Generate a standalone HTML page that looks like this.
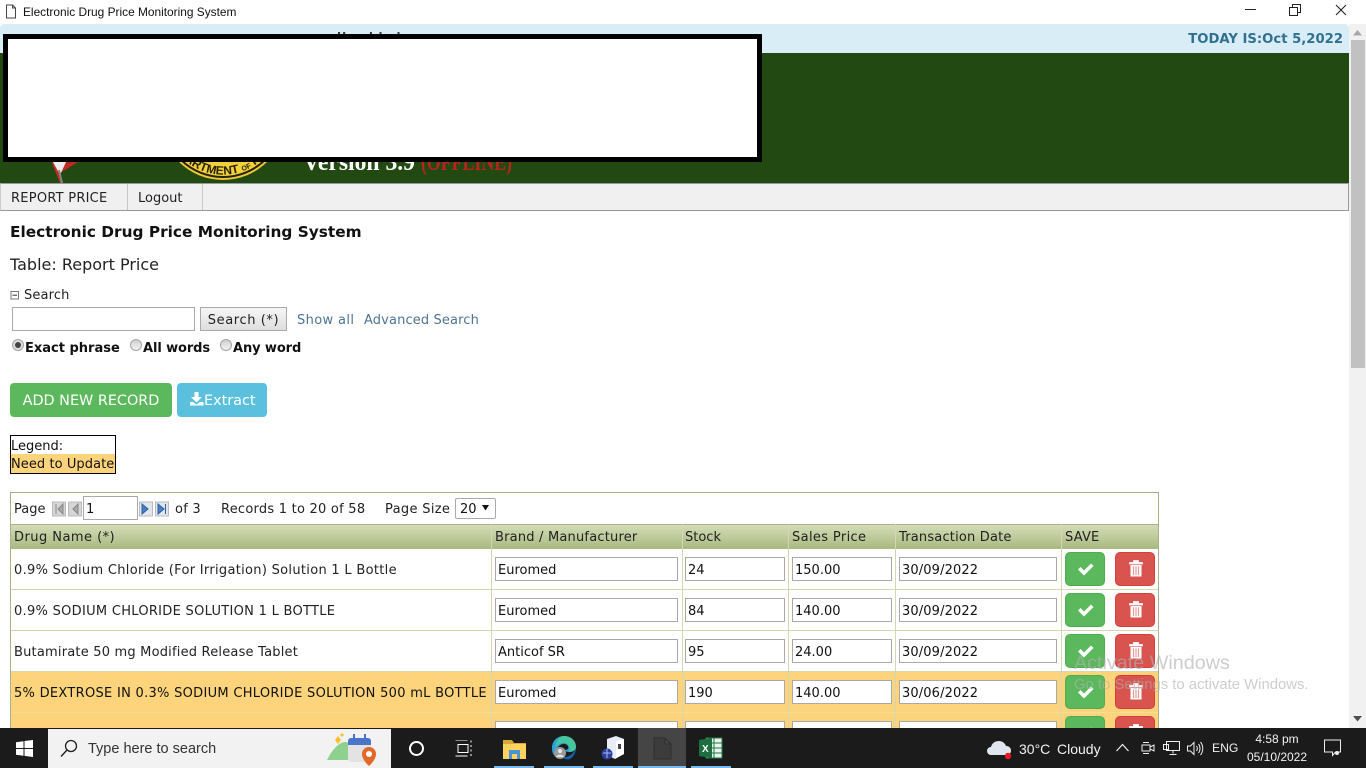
<!DOCTYPE html>
<html><head><meta charset="utf-8"><title>Electronic Drug Price Monitoring System</title>
<style>
html,body{margin:0;padding:0;width:1366px;height:768px;overflow:hidden;background:#fff}
body{position:relative;font-family:"DejaVu Sans","Liberation Sans",sans-serif;font-size:13px;color:#222}
.a{position:absolute;white-space:nowrap}
.inp{position:absolute;box-sizing:border-box;background:#fff;border:1px solid #a9a9a9;height:24px;line-height:25px;padding-left:2px;font-size:13px;color:#111}
.dt{letter-spacing:.12px}
.sv,.dl{position:absolute;width:40px;height:34px;border-radius:5px;box-sizing:border-box}
.sv{background:#5cb85c;border:1px solid #4cae4c}
.dl{background:#d9534f;border:1px solid #d43f3a}
.sv svg,.dl svg{position:absolute;left:11px;top:6px}
.hl{position:absolute;background:#d3d7b4}
.seg{font-family:"Liberation Sans",sans-serif}
.rad{position:absolute;width:12px;height:12px;border-radius:50%;box-sizing:border-box;background:linear-gradient(#cfcfcf,#f4f4f4);border:1px solid #a5a5a5}
</style></head><body>

<!-- window title bar -->
<svg class="a" style="left:5px;top:4px" width="12" height="15" viewBox="0 0 12 15"><path d="M1.5 1h6l3 3v10h-9z M7.5 1v3h3" fill="#fff" stroke="#444" stroke-width="1"/></svg>
<div class="a seg" style="left:23px;top:4px;font-size:11.9px;line-height:16px;color:#111">Electronic Drug Price Monitoring System</div>
<div class="a" style="left:1245px;top:9px;width:11px;height:1px;background:#222"></div>
<svg class="a" style="left:1289px;top:4px" width="12" height="12" viewBox="0 0 12 12"><path d="M.5 3.5h8v8h-8z M3.5 3V.5h8v8H9" fill="none" stroke="#222"/></svg>
<svg class="a" style="left:1335px;top:4px" width="12" height="12" viewBox="0 0 12 12"><path d="M1 1l10 10M11 1L1 11" fill="none" stroke="#222" stroke-width="1.1"/></svg>

<!-- top info -->
<div class="a" style="left:0;top:24px;width:1349px;height:29px;background:#d9edf7;border-radius:4px 4px 0 0"></div>
<div class="a" style="right:23px;top:31px;font-size:13.2px;font-weight:bold;color:#31708f;line-height:17px">TODAY IS:Oct 5,2022</div>
<div class="a" style="left:337px;top:30px;font-size:11px;color:#333;font-weight:bold;letter-spacing:1px">Ho   al   la l</div>

<!-- green header -->
<div class="a" style="left:0;top:53px;width:1349px;height:130px;background:#224912"></div>
<svg class="a" style="left:0;top:53px" width="560" height="130" viewBox="0 53 560 130">
<path d="M52 163L60 183H63L60 173L78 162Z" fill="#c62a22"/>
<path d="M53 162L60 175L66 162Z" fill="#eee"/>
<path d="M59 170L62 183" stroke="#7d8a80" stroke-width="2"/>
<circle cx="223" cy="117" r="63" fill="#e9c83a"/>
<circle cx="223" cy="117" r="60" fill="#f1d23a" stroke="#2a2208" stroke-width="2"/>
<path id="arcp" d="M173 146A58 58 0 0 0 273 146" fill="none"/>
<text font-family="Liberation Sans,sans-serif" font-weight="bold" font-size="12" fill="#2a2208"><textPath href="#arcp" startOffset="18">ARTMENT <tspan font-size="7">OF</tspan> HEALTH</textPath></text>
<text x="303" y="170" font-family="Liberation Serif,serif" font-weight="bold" font-size="24" fill="#fff" textLength="112" lengthAdjust="spacingAndGlyphs">Version 3.9</text>
<text x="421" y="170" font-family="Liberation Serif,serif" font-weight="bold" font-size="24" fill="#b8231c" textLength="91" lengthAdjust="spacingAndGlyphs">(OFFLINE)</text>
</svg>

<!-- redaction box -->
<div class="a" style="left:3px;top:34px;width:759px;height:128px;box-sizing:border-box;background:#fff;border:solid #000;border-width:5px 5px 5px 5px"></div>

<!-- menu -->
<div class="a" style="left:0;top:183px;width:1349px;height:28px;box-sizing:border-box;background:#f0f0f0;border:1px solid #999;border-left-color:#ccc"></div>
<div class="a" style="left:127px;top:184px;width:1px;height:26px;background:#c8c8c8"></div>
<div class="a" style="left:202px;top:184px;width:1px;height:26px;background:#c8c8c8"></div>
<div class="a" style="left:11px;top:191px;line-height:16px;font-size:13px;letter-spacing:.25px">REPORT PRICE</div>
<div class="a" style="left:138px;top:191px;line-height:16px;font-size:13px">Logout</div>

<!-- headings -->
<div class="a" style="left:10px;top:222px;font-size:15.35px;font-weight:bold;color:#111;line-height:20px">Electronic Drug Price Monitoring System</div>
<div class="a" style="left:10px;top:255px;font-size:16px;color:#222;line-height:20px">Table: Report Price</div>

<!-- search -->
<svg class="a" style="left:10px;top:290px" width="10" height="10"><rect x="1" y="1.5" width="7.5" height="7.5" fill="#fff" stroke="#777"/><path d="M2.5 5.2h4.5" stroke="#333"/></svg>
<div class="a" style="left:24px;top:287px;line-height:17px;font-size:13px;letter-spacing:.15px">Search</div>
<div class="a" style="left:12px;top:307px;width:183px;height:24px;box-sizing:border-box;background:#fff;border:1px solid #aaa"></div>
<div class="a" style="left:200px;top:307px;width:87px;height:24px;box-sizing:border-box;background:linear-gradient(#f6f6f6,#dedede);border:1px solid #aaa;text-align:center;line-height:25px;font-size:13px;letter-spacing:.6px">Search (*)</div>
<div class="a" style="left:297px;top:312px;line-height:17px;color:#4d7495;font-size:13px;letter-spacing:.37px">Show all</div>
<div class="a" style="left:364px;top:312px;line-height:17px;color:#4d7495;font-size:13px;letter-spacing:.13px">Advanced Search</div>
<div class="rad" style="left:12px;top:339px;background:#ddd"></div>
<div class="a" style="left:15px;top:342px;width:6px;height:6px;border-radius:50%;background:#444"></div>
<div class="a" style="left:25px;top:340px;line-height:17px;font-weight:bold;font-size:13px;color:#111">Exact phrase</div>
<div class="rad" style="left:130px;top:339px"></div>
<div class="a" style="left:143px;top:340px;line-height:17px;font-weight:bold;font-size:13px;color:#111;letter-spacing:-.1px">All words</div>
<div class="rad" style="left:220px;top:339px"></div>
<div class="a" style="left:233px;top:340px;line-height:17px;font-weight:bold;font-size:13px;color:#111;letter-spacing:-.1px">Any word</div>

<!-- buttons -->
<div class="a" style="left:10px;top:383px;width:162px;height:34px;background:#5cb85c;border-radius:4px;color:#fff;font-size:14.4px;line-height:36px;text-align:center">ADD NEW RECORD</div>
<div class="a" style="left:177px;top:383px;width:90px;height:34px;background:#5bc0de;border-radius:4px"></div>
<svg class="a" style="left:190px;top:392px" width="14" height="14" viewBox="0 0 14 14"><path d="M4.5 0h4v5h3.5L6.5 10.5 1 5h3.5z M0 10h3l3.5 2.5L10 10h3.5v3.5H0z" fill="#fff"/></svg>
<div class="a" style="left:204px;top:392px;color:#fff;font-size:14.4px;line-height:18px">Extract</div>

<!-- legend -->
<div class="a" style="left:10px;top:435px;width:106px;height:39px;box-sizing:border-box;border:1px solid #000;background:#fff">
<div style="height:18px;line-height:21px;padding-left:0;font-size:13px;color:#111">Legend:</div>
<div style="height:19px;line-height:22px;padding-left:0;font-size:13px;background:#fdd47c;color:#111;letter-spacing:.07px">Need to Update</div>
</div>

<!-- table -->
<div class="a" style="left:10px;top:492px;width:1149px;height:236px;overflow:hidden;box-sizing:border-box;border:solid #a9b08a;border-width:1px 1px 0 1px;background:#fff">
<div class="a" style="left:0;top:178px;width:1149px;height:41px;background:#fdd47c"></div>
<div class="a" style="left:0;top:220px;width:1149px;height:20px;background:#fdd47c"></div>
<div class="a" style="left:0;top:31px;width:1149px;height:25px;background:linear-gradient(#d4dcb6,#a9b981);border-top:1px solid #a9b08a;box-sizing:border-box"></div>
</div>
<!-- grid lines -->
<div class="hl" style="left:491px;top:524px;width:1px;height:204px"></div>
<div class="hl" style="left:682px;top:524px;width:1px;height:204px"></div>
<div class="hl" style="left:788px;top:524px;width:1px;height:204px"></div>
<div class="hl" style="left:895px;top:524px;width:1px;height:204px"></div>
<div class="hl" style="left:1061px;top:524px;width:1px;height:204px"></div>
<div class="hl" style="left:11px;top:589px;width:1147px;height:1px"></div>
<div class="hl" style="left:11px;top:630px;width:1147px;height:1px"></div>
<div class="hl" style="left:11px;top:671px;width:1147px;height:1px"></div>
<div class="hl" style="left:11px;top:712px;width:1147px;height:1px;background:#f3dca0"></div>

<!-- pager -->
<div class="a" style="left:14px;top:501px;line-height:17px">Page</div>
<svg class="a" style="left:52px;top:501px" width="32" height="16" viewBox="0 0 32 16"><rect x=".5" y="1" width="13" height="14" fill="#d6d6d6" stroke="#bbb"/><path d="M4 3v10M11 3L6 8l5 5z" fill="#aaa" stroke="#888"/><rect x="16.5" y="1" width="13" height="14" fill="#d6d6d6" stroke="#bbb"/><path d="M26 3l-5 5 5 5z" fill="#aaa" stroke="#888"/></svg>
<div class="a" style="left:83px;top:496px;width:55px;height:24px;box-sizing:border-box;background:#fff;border:1px solid #aaa;line-height:25px;padding-left:2px;color:#111">1</div>
<svg class="a" style="left:139px;top:501px" width="32" height="16" viewBox="0 0 32 16"><rect x=".5" y="1" width="13" height="14" fill="#dfe6ee" stroke="#bbb"/><path d="M3 3l6 5-6 5z" fill="#4a7fc1" stroke="#2f5f9e"/><rect x="16.5" y="1" width="13" height="14" fill="#dfe6ee" stroke="#bbb"/><path d="M19 3l6 5-6 5zM26.500 3v10" fill="#4a7fc1" stroke="#2f5f9e"/></svg>
<div class="a" style="left:175px;top:501px;line-height:17px;letter-spacing:.25px">of 3</div>
<div class="a" style="left:221px;top:501px;line-height:17px;letter-spacing:.24px">Records 1 to 20 of 58</div>
<div class="a" style="left:385px;top:501px;line-height:17px;letter-spacing:.33px">Page Size</div>
<div class="a" style="left:455px;top:498px;width:41px;height:21px;box-sizing:border-box;background:#fff;border:1px solid #aaa;border-radius:2px;line-height:21px;padding-left:4px;color:#111">20</div>
<svg class="a" style="left:482px;top:505px" width="8" height="6"><path d="M0 0h7L3.500 5.500z" fill="#111"/></svg>

<!-- table header text -->
<div class="a" style="left:14px;top:529px;line-height:17px;letter-spacing:.46px">Drug Name (*)</div>
<div class="a" style="left:495px;top:529px;line-height:17px;letter-spacing:.2px">Brand / Manufacturer</div>
<div class="a" style="left:685px;top:529px;line-height:17px">Stock</div>
<div class="a" style="left:792px;top:529px;line-height:17px;letter-spacing:.36px">Sales Price</div>
<div class="a" style="left:899px;top:529px;line-height:17px;letter-spacing:.19px">Transaction Date</div>
<div class="a" style="left:1065px;top:529px;line-height:17px;letter-spacing:.2px">SAVE</div>

<!-- rows -->
<div class="a" style="left:14px;top:562px;line-height:17px;letter-spacing:.3px">0.9% Sodium Chloride (For Irrigation) Solution 1 L Bottle</div>
<div class="inp" style="left:495px;top:557px;width:183px">Euromed</div><div class="inp" style="left:685px;top:557px;width:100px">24</div><div class="inp" style="left:792px;top:557px;width:100px">150.00</div><div class="inp dt" style="left:899px;top:557px;width:158px">30/09/2022</div>
<div class="sv" style="left:1065px;top:552px"><svg width="18" height="20" viewBox="0 0 18 20"><path d="M1 10.500l2.500-2.500 3.500 3.500L14 4.500l2.500 2.500-9.500 9.500z" fill="#fff"/></svg></div>
<div class="dl" style="left:1115px;top:552px"><svg width="18" height="20" viewBox="0 0 18 20"><path d="M2.500 3.500h13v1.500h-13zM6.500 3.500V1.500h5v2" fill="#fff" stroke="#fff" stroke-width=".8"/><path d="M3.500 6h11v11.500h-11z" fill="#fff"/><path d="M6.500 7.500v8.500M9 7.500v8.500M11.500 7.500v8.500" stroke="#e99a98" stroke-width="1.200"/></svg></div>

<div class="a" style="left:14px;top:603px;line-height:17px;letter-spacing:.29px">0.9% SODIUM CHLORIDE SOLUTION 1 L BOTTLE</div>
<div class="inp" style="left:495px;top:598px;width:183px">Euromed</div><div class="inp" style="left:685px;top:598px;width:100px">84</div><div class="inp" style="left:792px;top:598px;width:100px">140.00</div><div class="inp dt" style="left:899px;top:598px;width:158px">30/09/2022</div>
<div class="sv" style="left:1065px;top:593px"><svg width="18" height="20" viewBox="0 0 18 20"><path d="M1 10.500l2.500-2.500 3.500 3.500L14 4.500l2.500 2.500-9.500 9.500z" fill="#fff"/></svg></div>
<div class="dl" style="left:1115px;top:593px"><svg width="18" height="20" viewBox="0 0 18 20"><path d="M2.500 3.500h13v1.500h-13zM6.500 3.500V1.500h5v2" fill="#fff" stroke="#fff" stroke-width=".8"/><path d="M3.500 6h11v11.500h-11z" fill="#fff"/><path d="M6.500 7.500v8.500M9 7.500v8.500M11.500 7.500v8.500" stroke="#e99a98" stroke-width="1.200"/></svg></div>

<div class="a" style="left:14px;top:644px;line-height:17px;letter-spacing:.2px">Butamirate 50 mg Modified Release Tablet</div>
<div class="inp" style="left:495px;top:639px;width:183px">Anticof SR</div><div class="inp" style="left:685px;top:639px;width:100px">95</div><div class="inp" style="left:792px;top:639px;width:100px">24.00</div><div class="inp dt" style="left:899px;top:639px;width:158px">30/09/2022</div>
<div class="sv" style="left:1065px;top:634px"><svg width="18" height="20" viewBox="0 0 18 20"><path d="M1 10.500l2.500-2.500 3.500 3.500L14 4.500l2.500 2.500-9.500 9.500z" fill="#fff"/></svg></div>
<div class="dl" style="left:1115px;top:634px"><svg width="18" height="20" viewBox="0 0 18 20"><path d="M2.500 3.500h13v1.500h-13zM6.500 3.500V1.500h5v2" fill="#fff" stroke="#fff" stroke-width=".8"/><path d="M3.500 6h11v11.500h-11z" fill="#fff"/><path d="M6.500 7.500v8.500M9 7.500v8.500M11.500 7.500v8.500" stroke="#e99a98" stroke-width="1.200"/></svg></div>

<div class="a" style="left:14px;top:685px;line-height:17px;color:#111;letter-spacing:.29px">5% DEXTROSE IN 0.3% SODIUM CHLORIDE SOLUTION 500 mL BOTTLE</div>
<div class="inp" style="left:495px;top:680px;width:183px">Euromed</div><div class="inp" style="left:685px;top:680px;width:100px">190</div><div class="inp" style="left:792px;top:680px;width:100px">140.00</div><div class="inp dt" style="left:899px;top:680px;width:158px">30/06/2022</div>
<div class="sv" style="left:1065px;top:675px"><svg width="18" height="20" viewBox="0 0 18 20"><path d="M1 10.500l2.500-2.500 3.500 3.500L14 4.500l2.500 2.500-9.500 9.500z" fill="#fff"/></svg></div>
<div class="dl" style="left:1115px;top:675px"><svg width="18" height="20" viewBox="0 0 18 20"><path d="M2.500 3.500h13v1.500h-13zM6.500 3.500V1.500h5v2" fill="#fff" stroke="#fff" stroke-width=".8"/><path d="M3.500 6h11v11.500h-11z" fill="#fff"/><path d="M6.500 7.500v8.500M9 7.500v8.500M11.500 7.500v8.500" stroke="#e99a98" stroke-width="1.200"/></svg></div>

<div class="inp" style="left:495px;top:721px;width:183px;height:7px;border-bottom:0"></div><div class="inp" style="left:685px;top:721px;width:100px;height:7px;border-bottom:0"></div><div class="inp" style="left:792px;top:721px;width:100px;height:7px;border-bottom:0"></div><div class="inp" style="left:899px;top:721px;width:158px;height:7px;border-bottom:0"></div>
<div class="sv" style="left:1065px;top:716px"><svg width="18" height="20" viewBox="0 0 18 20"><path d="M1 10.500l2.500-2.500 3.500 3.500L14 4.500l2.500 2.500-9.500 9.500z" fill="#fff"/></svg></div>
<div class="dl" style="left:1115px;top:716px"><svg width="18" height="20" viewBox="0 0 18 20"><path d="M2.500 3.500h13v1.500h-13zM6.500 3.500V1.500h5v2" fill="#fff" stroke="#fff" stroke-width=".8"/></svg></div>

<!-- scrollbar -->
<div class="a" style="left:1349px;top:24px;width:17px;height:704px;background:#f1f1f1"></div>
<div class="a" style="left:1351px;top:40px;width:14px;height:328px;background:#c1c1c1"></div>
<svg class="a" style="left:1353px;top:30px" width="10" height="6"><path d="M0 5.500L4.500 0 9 5.500z" fill="#a6a6a6"/></svg>
<svg class="a" style="left:1353px;top:716px" width="10" height="6"><path d="M0 0h9L4.500 5.500z" fill="#505050"/></svg>

<!-- activate windows -->
<div class="a seg" style="left:1074px;top:651px;font-size:19.75px;line-height:24px;color:#b0b0b0;opacity:.62">Activate Windows</div>
<div class="a seg" style="left:1074px;top:677px;font-size:14.87px;line-height:17px;color:#b0b0b0;opacity:.62">Go to Settings to activate Windows.</div>

<!-- taskbar -->
<div class="a" style="left:0;top:728px;width:1366px;height:40px;background:#1b1b1b"></div>
<svg class="a" style="left:16px;top:740px" width="17" height="17" viewBox="0 0 17 17"><path d="M0 2.300L7.500 1.200V8H0zM8.500 1L17 0v8H8.500zM0 9h7.500v6.800L0 14.700zM8.500 9H17v8l-8.500-1.100z" fill="#fff"/></svg>
<div class="a" style="left:48px;top:729px;width:343px;height:39px;background:#f2f2f2"></div>
<svg class="a" style="left:60px;top:739px" width="18" height="19" viewBox="0 0 18 19"><circle cx="11" cy="7" r="5.500" fill="none" stroke="#222" stroke-width="1.300"/><path d="M7 11l-6 6.500" stroke="#222" stroke-width="1.400"/></svg>
<div class="a seg" style="left:88px;top:740px;font-size:14.500px;line-height:19px;color:#333">Type here to search</div>
<svg class="a" style="left:327px;top:730px" width="52" height="36" viewBox="0 0 52 36">
<path d="M8 10l3-4 3 4-3 4z" fill="#f7c12c"/><path d="M13 5l2-2 2 2-2 2z" fill="#f7c12c"/>
<path d="M0 30C6 18 13 12 18 12c6 0 10 8 12 18z" fill="#8ed08e"/>
<rect x="21" y="8" width="23" height="24" rx="3" fill="#e3e3e3"/>
<path d="M21 15v-4a3 3 0 0 1 3-3h17a3 3 0 0 1 3 3v4z" fill="#4a76c9"/>
<path d="M27 4v6M38 4v6" stroke="#4a76c9" stroke-width="2"/>
<path d="M49 24c0 6-7 12-7 12s-7-6-7-12a7 7 0 0 1 14 0z" fill="#e2692a"/>
<circle cx="42" cy="24" r="3" fill="#fff"/></svg>
<svg class="a" style="left:408px;top:740px" width="17" height="17"><circle cx="8.500" cy="8.500" r="6.500" fill="none" stroke="#fff" stroke-width="2"/></svg>
<svg class="a" style="left:455px;top:740px" width="18" height="17" viewBox="0 0 18 17"><path d="M.5 0h12M.5 16h12M3 4.500h10v8H3zM16 .5v2M16 5v2M16 9.500v2M16 14v2" fill="none" stroke="#fff"/></svg>
<svg class="a" style="left:503px;top:738px" width="24" height="22" viewBox="0 0 24 22"><path d="M0 2h9l2 3h12v4H0z" fill="#d8a93a"/><rect y="6" width="23" height="15" fill="#ffd45e"/><rect x="6" y="12" width="11" height="9" fill="#4c93d6"/><rect x="9" y="16" width="5" height="5" fill="#ffd45e"/></svg>
<svg class="a" style="left:551px;top:735px" width="26" height="26" viewBox="0 0 26 26"><path d="M1 13C1 6 6 1 13 1c7 0 12 5 12 11 0 3-3 5-7 5-2 0-4-1-4-2 3 0 4-2 3-4-2-3-6-3-9 0-3 3-4 7-2 11-4-1-5-5-5-9z" fill="#2f9fd8"/><path d="M13 1c7 0 12 5 12 11 0 3-3 5-7 5 2-4-1-9-5-9-4 0-7 2-9 5C5 6 8 1 13 1z" fill="#47c59b"/><path d="M25 13c0 5-3 9-6 11-3 1-6 0-8-2 4 1 11-1 14-9z" fill="#1464b5"/><circle cx="9" cy="18" r="6" fill="#9a9a9a"/><circle cx="9" cy="16" r="2" fill="#e6e6e6"/><path d="M5 22c1-3 7-3 8 0z" fill="#e6e6e6"/></svg>
<svg class="a" style="left:601px;top:736px" width="24" height="25" viewBox="0 0 24 25"><path d="M6 3l9-3 8 3v15l-9 5-8-4z" fill="#e8ecf4"/><path d="M15 5l8-2v15l-8 4z" fill="#fff"/><rect x="17" y="8" width="3" height="5" fill="#444"/><circle cx="6" cy="18" r="5.500" fill="#2b3f9e"/><path d="M2 17h8M6 13v9" stroke="#a9b8e8"/></svg>
<div class="a" style="left:638px;top:728px;width:48px;height:40px;background:#454545"></div>
<svg class="a" style="left:653px;top:737px" width="19" height="23" viewBox="0 0 19 23"><path d="M1 1h11l6 6v15H1z M12 1v6h6" fill="#3c3c3c" stroke="#2e2e2e"/></svg>
<svg class="a" style="left:699px;top:737px" width="24" height="22" viewBox="0 0 24 22"><rect x="7" y="1" width="16" height="20" fill="#e9f3ec" stroke="#1f7a45"/><path d="M15 1v20M7 6h16M7 11h16M7 16h16" stroke="#1f7a45"/><path d="M0 3l13-2v20L0 19z" fill="#1d6f42"/><text x="3" y="15" font-family="Liberation Sans,sans-serif" font-size="10" font-weight="bold" fill="#fff">X</text></svg>
<div class="a" style="left:494px;top:766px;width:40px;height:2px;background:#76b9ed"></div>
<div class="a" style="left:544px;top:766px;width:40px;height:2px;background:#76b9ed"></div>
<div class="a" style="left:593px;top:766px;width:40px;height:2px;background:#76b9ed"></div>
<div class="a" style="left:638px;top:766px;width:48px;height:2px;background:#76b9ed"></div>
<div class="a" style="left:691px;top:766px;width:40px;height:2px;background:#76b9ed"></div>

<!-- tray -->
<svg class="a" style="left:987px;top:738px" width="26" height="23" viewBox="0 0 26 23"><path d="M4 17a4 4 0 0 1 0-8c1-4 4-6 8-6 3 0 6 2 7 5a4.500 4.500 0 0 1 1 9z" fill="#dfe6ee"/><circle cx="21" cy="18" r="3.200" fill="#e01b24"/></svg>
<div class="a seg" style="left:1019px;top:740px;font-size:14px;line-height:18px;color:#f2f2f2">30°C</div>
<div class="a seg" style="left:1057px;top:740px;font-size:14px;line-height:18px;color:#f2f2f2">Cloudy</div>
<svg class="a" style="left:1116px;top:743px" width="13" height="9"><path d="M.5 8L6.500 1.500 12.500 8" fill="none" stroke="#eee" stroke-width="1.200"/></svg>
<svg class="a" style="left:1141px;top:740px" width="14" height="16" viewBox="0 0 14 16"><path d="M1 5h8v6H1zM9 7l4-2v6l-4-2zM2 2.500h6M2 13.500h6" fill="none" stroke="#eee"/></svg>
<svg class="a" style="left:1163px;top:741px" width="17" height="15" viewBox="0 0 17 15"><path d="M3.500.5h13v9h-13zM.5 3.500h5v5h-5zM10 9.500v3M6.500 13.500h7" fill="#1b1b1b" stroke="#eee"/></svg>
<svg class="a" style="left:1187px;top:741px" width="17" height="15" viewBox="0 0 17 15"><path d="M.5 5h3L7 1.500v12L3.500 10h-3zM9.500 5c1 1.500 1 3.500 0 5M11.500 3c2 2.500 2 6.500 0 9M13.500 1c3 3.500 3 9.500 0 13" fill="none" stroke="#eee"/></svg>
<div class="a seg" style="left:1212px;top:740px;font-size:12.2px;line-height:16px;color:#f2f2f2">ENG</div>
<div class="a seg" style="left:1227px;top:731px;width:100px;text-align:center;font-size:12px;line-height:16px;color:#f2f2f2">4:58 pm</div>
<div class="a seg" style="left:1227px;top:749px;width:100px;text-align:center;font-size:12px;line-height:16px;color:#f2f2f2">05/10/2022</div>
<svg class="a" style="left:1324px;top:739px" width="18" height="18" viewBox="0 0 18 18"><path d="M.5 1h16v12h-5l-3 3.500V13H.5z" fill="none" stroke="#eee"/><circle cx="13" cy="14" r="2" fill="#eee"/></svg>
</body></html>
